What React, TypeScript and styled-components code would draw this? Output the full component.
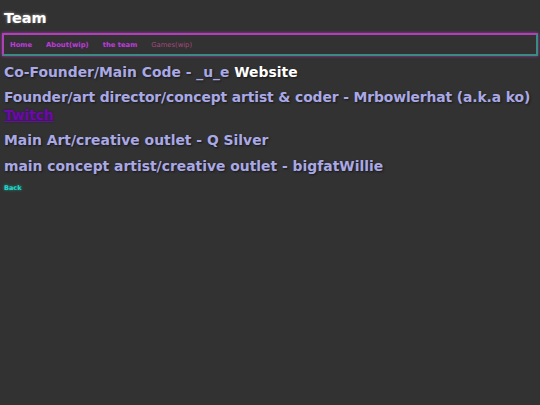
import React from 'react';
import styled, { createGlobalStyle } from 'styled-components';

const GlobalStyle = createGlobalStyle`
  html, body {
    margin: 0;
    padding: 0;
    background: #323232;
  }
  body {
    font-family: "DejaVu Sans", Verdana, sans-serif;
  }
`;

const Page = styled.div`
  min-height: 405px;
  padding: 10px 2px 0 2px;
  box-sizing: border-box;
`;

const Title = styled.h1`
  margin: 0 0 0 2px;
  font-size: 14.5px;
  line-height: 17px;
  font-weight: bold;
  color: #ffffff;
  text-shadow: 0 0 3px #b8b8b8, 1px 1px 2px #000;
`;

const Nav = styled.nav`
  display: flex;
  align-items: center;
  gap: 14px;
  margin-top: 6px;
  height: 19px;
  padding: 0 6px;
  border: 2px solid #3c8a86;
  border-top-color: #b040b8;
  border-left-color: #b040b8;
  box-shadow: 0 0 3px #9a3aa2;
`;

const NavLink = styled.a<{ $muted?: boolean }>`
  font-size: 6.8px;
  font-weight: ${(p) => (p.$muted ? 'normal' : 'bold')};
  color: ${(p) => (p.$muted ? '#a64a7e' : '#b045c8')};
  text-decoration: none;
  text-shadow: ${(p) => (p.$muted ? 'none' : '0 0 2px #5a1a70')};
`;

const Member = styled.h2<{ $tight?: boolean; $gap?: number }>`
  margin: ${(p) => p.$gap ?? 8}px 0 0 2px;
  font-size: 13.9px;
  font-weight: bold;
  line-height: 17px;
  color: #a9a9e6;
  text-shadow: 1px 1px 2px #181818;
  white-space: nowrap;
  letter-spacing: ${(p) => (p.$tight ? '-0.12px' : 'normal')};
`;

const Bright = styled.a`
  color: #ffffff;
  text-decoration: none;
`;

const Twitch = styled.a`
  display: block;
  line-height: 18px;
  color: #6a0ba8;
  text-decoration: underline;
  text-shadow: 0 0 2px #3a0a60;
`;

const Back = styled.a`
  display: inline-block;
  margin: 7px 0 0 2px;
  font-size: 6.5px;
  font-weight: bold;
  color: #22d8c8;
  text-decoration: none;
  text-shadow: 0 0 3px #1aa89c;
`;

export default function App() {
  return (
    <Page>
      <GlobalStyle />
      <Title>Team</Title>
      <Nav>
        <NavLink>Home</NavLink>
        <NavLink>About(wip)</NavLink>
        <NavLink>the team</NavLink>
        <NavLink $muted>Games(wip)</NavLink>
      </Nav>
      <Member>
        Co-Founder/Main Code - _u_e <Bright>Website</Bright>
      </Member>
      <Member $tight>
        Founder/art director/concept artist &amp; coder - Mrbowlerhat (a.k.a ko)
        <Twitch>Twitch</Twitch>
      </Member>
      <Member>Main Art/creative outlet - Q Silver</Member>
      <Member $gap={9}>main concept artist/creative outlet - bigfatWillie</Member>
      <Back>Back</Back>
    </Page>
  );
}
